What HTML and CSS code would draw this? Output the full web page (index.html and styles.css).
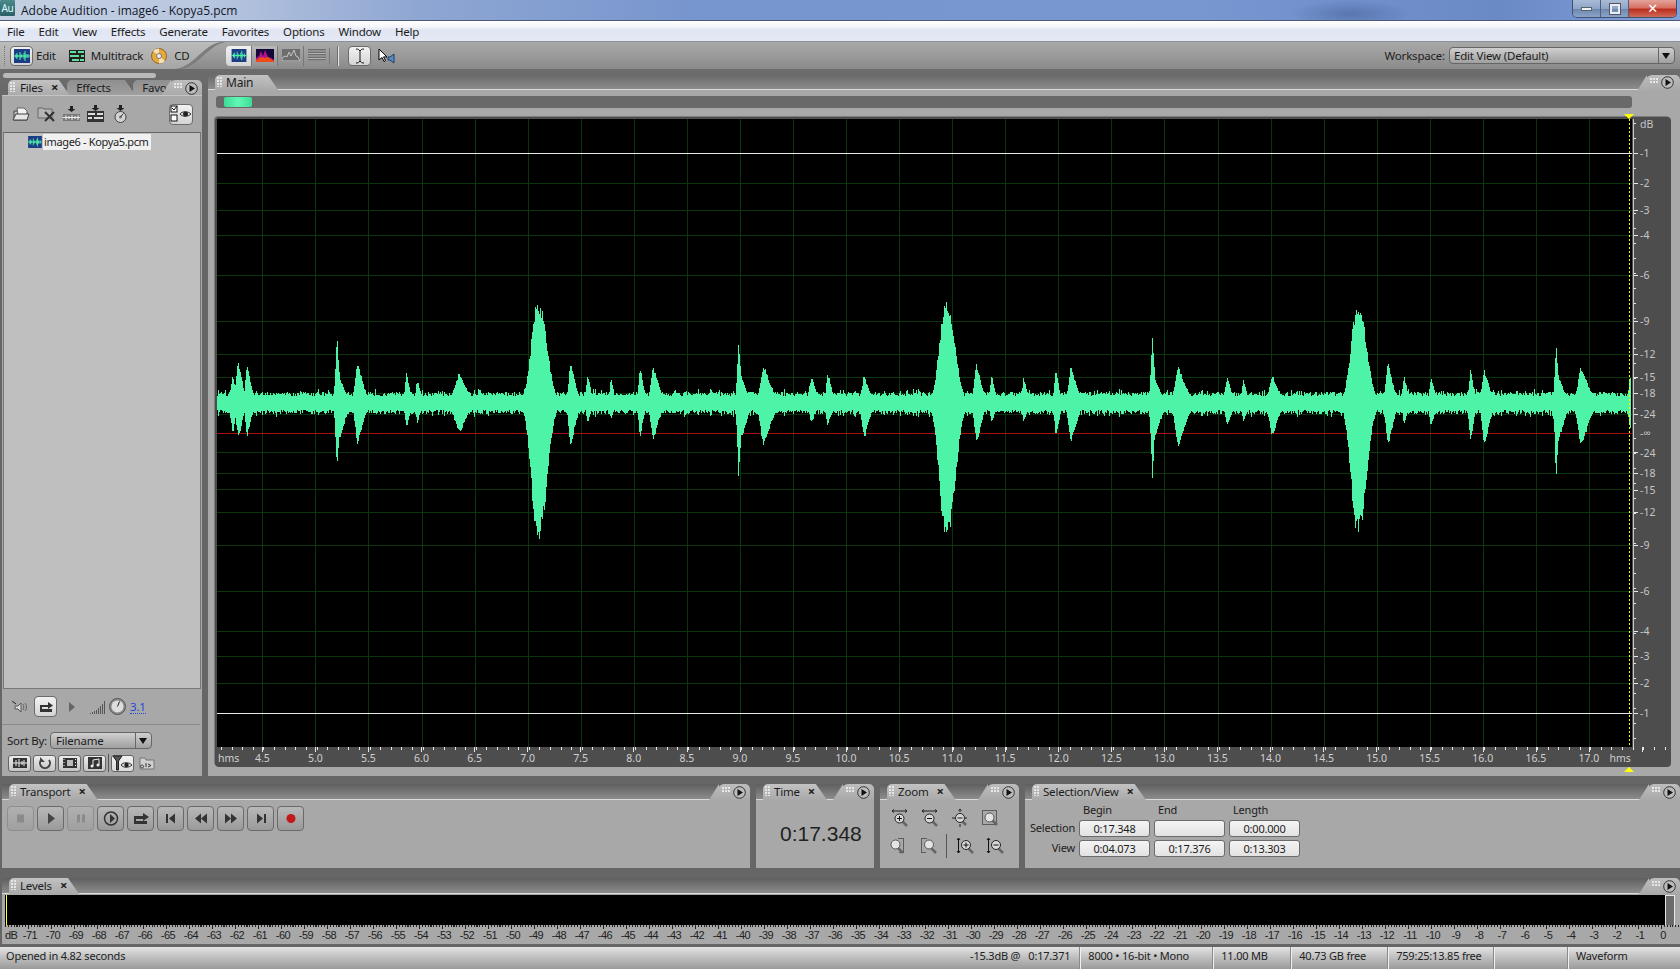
FILE: index.html
```html
<!DOCTYPE html>
<html lang="en">
<head>
<meta charset="utf-8">
<title>Adobe Audition - image6 - Kopya5.pcm</title>
<link rel="stylesheet" href="styles.css">
</head>
<body>
<svg class="defs" width="0" height="0" aria-hidden="true">
  <defs>
    <symbol id="i-wave" viewBox="0 0 16 14"><rect width="16" height="14" fill="#1c3d86"/><path d="M0 7h16M2 5v4M3 4v6M4 6v2M6 3v8M7 5v4M8 6v2M10 4v6M11 2v10M12 5v4M14 5v4" stroke="#4ef5a9" fill="none"/></symbol>
    <symbol id="i-multi" viewBox="0 0 16 12"><rect width="16" height="12" fill="#222"/><path d="M1 1h6v2H1zM9 1h6v2H9zM1 5h9v2H1zM12 5h3v2h-3zM3 9h7v2H3zM11 9h4v2h-4z" fill="#5ee09a"/></symbol>
    <symbol id="i-cd" viewBox="0 0 16 16"><circle cx="8" cy="8" r="7.5" fill="#e8a83a" stroke="#8a6a35"/><path d="M8 8 2 3a7.5 7.5 0 0 1 6-2.500zM8 8l6 5a7.500 7.500 0 0 1-6 2.500z" fill="#f6e2b8"/><circle cx="8" cy="8" r="2.500" fill="#eee" stroke="#777"/></symbol>
    <symbol id="i-spec" viewBox="0 0 18 13"><rect width="18" height="13" fill="#14083a"/><path d="M0 13V9l3-2 2-5 2 5 2-6 3 7 3 1 3 2v2z" fill="#b0128c"/><path d="M0 13v-2l5-3 4 1 3-1 6 4v1z" fill="#f04a1a"/></symbol>
    <symbol id="i-grey-a" viewBox="0 0 18 13"><rect width="18" height="13" fill="#6d6d6d"/><path d="M0 12V9l3-2 2 1 2-5 2 4 3-6 2 6 2 1 2 4z" fill="none" stroke="#c4c4c4"/></symbol>
    <symbol id="i-grey-b" viewBox="0 0 18 13"><rect width="18" height="13" fill="#6d6d6d"/><path d="M0 2h18M0 4.500h18M0 7h18M0 9.500h18M0 12h18" stroke="#b4b4b4"/></symbol>
    <symbol id="i-ibeam" viewBox="0 0 12 16"><path d="M2 1c2 0 3 .5 4 2 1-1.500 2-2 4-2M6 3v10M2 15c2 0 3-.5 4-2 1 1.500 2 2 4 2" fill="none" stroke="#111"/></symbol>
    <symbol id="i-cursor" viewBox="0 0 17 16"><path d="M1 1v11l3-2.500 2 4 1.500-.8-2-3.800H9z" fill="#fff" stroke="#000"/><path d="M10 9h2l4-3v9l-4-3h-2z" fill="#5b8ac0" stroke="#1e3d66"/></symbol>
    <symbol id="i-open" viewBox="0 0 18 16"><path d="M2 5h5l1 1h7v8H2z" fill="#bdbdbd" stroke="#444"/><path d="M5 2h7l3 3v4H6z" fill="#f2f2f2" stroke="#666"/><path d="M1 14l3-6h13l-2 6z" fill="#e6e6e6" stroke="#444"/></symbol>
    <symbol id="i-close" viewBox="0 0 19 16"><path d="M1 2h5l1 1h8v9H1z" fill="#b5b5b5" stroke="#666"/><path d="M8 6l9 9M17 6l-9 9" stroke="#333" stroke-width="2"/></symbol>
    <symbol id="i-ins-w" viewBox="0 0 17 16"><path d="M7 0h3v3h2.500L8.500 6 4.500 3H7z" fill="#222"/><rect y="8" width="17" height="7" fill="#777"/><path d="M0 11.500h17M3 9v5M6 10v3M9 9v5M12 10v3M15 9v5" stroke="#eee"/></symbol>
    <symbol id="i-ins-m" viewBox="0 0 17 18"><path d="M7 0h3v3h2.500L8.500 6 4.500 3H7z" fill="#222"/><rect y="6" width="17" height="11" fill="#333"/><path d="M1 8h7v2H1zM10 8h6v2h-6zM1 12h4v2H1zM7 12h9v2H7z" fill="#ddd"/></symbol>
    <symbol id="i-ins-c" viewBox="0 0 13 18"><path d="M5 0h3v3h2.500L6.500 6 2.500 3H5z" fill="#222"/><circle cx="6.500" cy="12" r="5.500" fill="#d4d4d4" stroke="#444"/><circle cx="6.500" cy="12" r="1.500" fill="#777"/><path d="M6.500 12l3-3.500" stroke="#333"/></symbol>
    <symbol id="i-filter" viewBox="0 0 22 18"><rect x="1" y="1" width="6" height="6" fill="#fff" stroke="#111"/><path d="M2 3l2 2 3-4" stroke="#111" fill="none"/><rect x="1" y="10" width="6" height="6" fill="#fff" stroke="#111"/><path d="M10 9c2-3 8-3 11 0-3 3-9 3-11 0z" fill="#ddd" stroke="#333"/><circle cx="15.500" cy="9" r="2.500" fill="#222"/></symbol>
    <symbol id="i-speaker" viewBox="0 0 17 12"><path d="M0 0l4 3" stroke="#222"/><path d="M3 5h3l3-3v9L6 8H3z" fill="#ddd" stroke="#555"/><path d="M11 3c1 2 1 4 0 6M13 2c2 2 2 6 0 8" stroke="#666" fill="none"/></symbol>
    <symbol id="i-loop" viewBox="0 0 16 14"><path d="M2 5h8V2l5 3.500L10 9V7H4v2h10v3H2z" fill="#333"/></symbol>
    <symbol id="i-bars" viewBox="0 0 16 14"><path d="M.500 13v1M2.500 12v2M4.500 11v3M6.500 10v4M8.500 8v6M10.500 6v8M12.500 4v10M14.500 1v13" stroke="#555" fill="none"/></symbol>
    <symbol id="i-knob" viewBox="0 0 17 17"><circle cx="8.500" cy="8.500" r="8" fill="#8c8c8c" stroke="#555"/><circle cx="8.500" cy="8.500" r="6" fill="#ddd"/><path d="M8.500 8.500l2-5" stroke="#222"/></symbol>
    <symbol id="i-f-wave" viewBox="0 0 14 10"><rect width="14" height="10" fill="#333"/><path d="M0 5h14M3 2v6M6 1v8M9 3v4M11 2v6" stroke="#eee"/></symbol>
    <symbol id="i-f-loop" viewBox="0 0 14 12"><path d="M3 3a5 5 0 1 0 8 0" fill="none" stroke="#444" stroke-width="2"/><path d="M2 0v5h5z" fill="#444"/></symbol>
    <symbol id="i-f-film" viewBox="0 0 14 10"><rect width="14" height="10" fill="#333"/><path d="M4 2h6v6H4z" fill="#bbb"/><path d="M1 1v1M1 4v1M1 7v1M12.500 1v1M12.500 4v1M12.500 7v1" stroke="#eee"/></symbol>
    <symbol id="i-f-note" viewBox="0 0 14 12"><rect width="14" height="12" fill="#333"/><path d="M5 9V3l6-1v6" stroke="#eee" fill="none"/><circle cx="4" cy="9" r="1.500" fill="#eee"/><circle cx="10" cy="8" r="1.500" fill="#eee"/></symbol>
    <symbol id="i-funnel" viewBox="0 0 20 16"><path d="M0 1h9L5.500 6v9h-2V6z" fill="#555" stroke="#222"/><path d="M8 10c2-3 8-3 11 0-3 3-9 3-11 0z" fill="#ddd" stroke="#333"/><circle cx="13.500" cy="10" r="2.200" fill="#222"/></symbol>
    <symbol id="i-folder" viewBox="0 0 16 13"><path d="M1 1h5l1 2h8v9H1z" fill="#d0d0d0" stroke="#777"/><path d="M3 8a1.500 1.500 0 1 0 .1 0M7 6v4M9 7l3 1.500L9 10" fill="none" stroke="#333"/></symbol>
    <symbol id="i-menu" viewBox="0 0 13 13"><circle cx="6.500" cy="6.500" r="5.800" fill="#bcbcbc" stroke="#333"/><path d="M4.500 3v7l5.500-3.500z" fill="#111"/></symbol>
    <symbol id="t-stop" viewBox="0 0 27 25"><rect x="10" y="8.500" width="7" height="8" fill="#8a8a8a"/></symbol>
    <symbol id="t-play" viewBox="0 0 27 25"><path d="M11 7l7 5.500-7 5.500z" fill="#444"/></symbol>
    <symbol id="t-pause" viewBox="0 0 27 25"><path d="M10 8.500h3v8h-3zM15 8.500h3v8h-3z" fill="#8a8a8a"/></symbol>
    <symbol id="t-cue" viewBox="0 0 27 25"><circle cx="14" cy="12.500" r="6.500" fill="none" stroke="#333" stroke-width="1.500"/><path d="M13 8l5 4.500-5 4.500z" fill="#333"/></symbol>
    <symbol id="t-loop" viewBox="0 0 27 25"><path d="M7 10h9V7l6 4-6 4v-2H9v2h11v3H7z" fill="#333"/></symbol>
    <symbol id="t-start" viewBox="0 0 27 25"><path d="M9 8h2v9H9zM18 7.500v10l-6-5z" fill="#333"/></symbol>
    <symbol id="t-rew" viewBox="0 0 27 25"><path d="M14 7.500v10l-6-5zM20 7.500v10l-6-5z" fill="#333"/></symbol>
    <symbol id="t-ff" viewBox="0 0 27 25"><path d="M8 7.500v10l6-5zM14 7.500v10l6-5z" fill="#333"/></symbol>
    <symbol id="t-end" viewBox="0 0 27 25"><path d="M10 7.500v10l6-5zM17 8h2v9h-2z" fill="#333"/></symbol>
    <symbol id="t-rec" viewBox="0 0 27 25"><circle cx="14" cy="12.500" r="4.500" fill="#c01a1a"/></symbol>
    <symbol id="z-in-h" viewBox="0 0 18 18"><path d="M1 2h15M1 2l2-1.500M1 2l2 1.500M16 2l-2-1.500M16 2l-2 1.500" stroke="#222" fill="none"/><path d="M11 12l5 5" stroke="#666" stroke-width="2.500"/><circle cx="8.500" cy="9.500" r="4.500" fill="#d8d8d8" stroke="#222"/><path d="M6 9.500h5M8.500 7v5" stroke="#111"/></symbol>
    <symbol id="z-out-h" viewBox="0 0 18 18"><path d="M1 2h15M1 2l2-1.500M1 2l2 1.500M16 2l-2-1.500M16 2l-2 1.500" stroke="#222" fill="none"/><path d="M11 12l5 5" stroke="#666" stroke-width="2.500"/><circle cx="8.500" cy="9.500" r="4.500" fill="#d8d8d8" stroke="#222"/><path d="M6 9.500h5" stroke="#111"/></symbol>
    <symbol id="z-out-all" viewBox="0 0 18 18"><path d="M9 0v3M7.500 1.500L9 0l1.500 1.500M9 18v-3M1 9h3M16 9h-2" stroke="#222" fill="none"/><path d="M11 12l4 4" stroke="#666" stroke-width="2.500"/><circle cx="9" cy="9" r="4.500" fill="#d8d8d8" stroke="#222"/><path d="M6.500 9h5" stroke="#111"/></symbol>
    <symbol id="z-sel" viewBox="0 0 18 18"><rect x="1.500" y="1.500" width="14" height="14" fill="none" stroke="#111" stroke-dasharray="1 1"/><path d="M11 11l5 5" stroke="#666" stroke-width="2.500"/><circle cx="8.500" cy="8.500" r="4.500" fill="#e4e4e4" stroke="#555"/></symbol>
    <symbol id="z-left" viewBox="0 0 18 18"><path d="M9.500 1.500h5v14h-5" fill="none" stroke="#111" stroke-dasharray="1 1"/><path d="M9 11l5 5" stroke="#666" stroke-width="2.500"/><circle cx="6.500" cy="7.500" r="4.500" fill="#e4e4e4" stroke="#555"/></symbol>
    <symbol id="z-right" viewBox="0 0 18 18"><path d="M7.500 1.500h-5v14h5" fill="none" stroke="#111" stroke-dasharray="1 1"/><path d="M12 11l5 5" stroke="#666" stroke-width="2.500"/><circle cx="10" cy="7.500" r="4.500" fill="#e4e4e4" stroke="#555"/></symbol>
    <symbol id="z-vin" viewBox="0 0 18 18"><path d="M2.500 1v15M1 3l1.500-2L4 3M1 14l1.500 2L4 14" stroke="#111" fill="none"/><path d="M12 11l5 5" stroke="#666" stroke-width="2.500"/><circle cx="10" cy="8" r="4.500" fill="#d8d8d8" stroke="#222"/><path d="M7.500 8h5M10 5.500v5" stroke="#111"/></symbol>
    <symbol id="z-vout" viewBox="0 0 18 18"><path d="M2.500 1v15M1 3l1.500-2L4 3M1 14l1.500 2L4 14" stroke="#111" fill="none"/><path d="M12 11l5 5" stroke="#666" stroke-width="2.500"/><circle cx="10" cy="8" r="4.500" fill="#d8d8d8" stroke="#222"/><path d="M7.500 8h5" stroke="#111"/></symbol>
  </defs>
</svg>

<header class="titlebar">
  <div class="au-logo">Au</div>
  <div class="title-text">Adobe Audition - image6 - Kopya5.pcm</div>
  <div class="winbtns">
    <div class="winbtn"><span class="win-min"></span></div>
    <div class="winbtn"><span class="win-max"></span></div>
    <div class="winbtn win-close">✕</div>
  </div>
</header>

<nav class="menubar">
  <span>File</span><span>Edit</span><span>View</span><span>Effects</span><span>Generate</span><span>Favorites</span><span>Options</span><span>Window</span><span>Help</span>
</nav>

<div class="toolbar">
  <div class="toolgrip"></div>
  <div class="modes">
    <button class="tbtn tbtn-on"><svg width="16" height="14"><use href="#i-wave"/></svg></button><span class="mode-label">Edit</span>
    <svg class="mode-icon" width="16" height="12"><use href="#i-multi"/></svg><span class="mode-label">Multitrack</span>
    <svg class="mode-icon mode-cd" width="16" height="16"><use href="#i-cd"/></svg><span class="mode-label">CD</span>
  </div>
  <div class="viewgroup">
    <button class="vbtn vbtn-on"><svg width="20" height="13"><use href="#i-wave"/></svg></button>
    <button class="vbtn"><svg width="18" height="13"><use href="#i-spec"/></svg></button>
    <button class="vbtn vbtn-off"><svg width="18" height="13"><use href="#i-grey-a"/></svg></button>
    <button class="vbtn vbtn-off"><svg width="18" height="13"><use href="#i-grey-b"/></svg></button>
  </div>
  <div class="toolsep"></div>
  <button class="tbtn tbtn-on tbtn-beam"><svg width="12" height="16"><use href="#i-ibeam"/></svg></button>
  <svg class="cursor-icon" width="17" height="16"><use href="#i-cursor"/></svg>
  <div class="workspace-box">
    <span class="workspace-label">Workspace:</span>
    <div class="combo combo-ws"><span class="combo-text">Edit View (Default)</span><span class="combo-arrow"></span></div>
  </div>
</div>

<div class="workarea">
  <aside class="left-col">
    <div class="scrollhint"></div>
    <div class="tabbar tabbar-files">
      <div class="tab tab-files"><i class="grip"></i>Files<b class="tabx">×</b></div>
      <div class="tab tab-off tab-effects">Effects</div>
      <div class="tab tab-off tab-fav">Favo</div>
      <div class="opts opts-files"><i class="grip"></i><svg width="13" height="13"><use href="#i-menu"/></svg></div>
    </div>
    <div class="files-body">
      <div class="files-tools">
        <svg width="18" height="16"><use href="#i-open"/></svg>
        <svg width="19" height="16"><use href="#i-close"/></svg>
        <svg width="17" height="16"><use href="#i-ins-w"/></svg>
        <svg width="17" height="18"><use href="#i-ins-m"/></svg>
        <svg class="tool-cd" width="13" height="18"><use href="#i-ins-c"/></svg>
        <button class="tbtn tbtn-on tbtn-filter"><svg width="22" height="18"><use href="#i-filter"/></svg></button>
      </div>
      <div class="files-list">
        <div class="file-row"><svg width="14" height="12"><use href="#i-wave"/></svg><span class="file-name">image6 - Kopya5.pcm</span></div>
      </div>
      <div class="files-preview">
        <svg width="17" height="12"><use href="#i-speaker"/></svg>
        <button class="tbtn tbtn-on tbtn-small"><svg width="16" height="14"><use href="#i-loop"/></svg></button>
        <span class="tri"></span>
        <svg class="bars" width="16" height="14"><use href="#i-bars"/></svg>
        <svg class="knob" width="17" height="17"><use href="#i-knob"/></svg>
        <span class="linkval">3.1</span>
      </div>
      <div class="sortrow">
        <span>Sort By:</span>
        <div class="combo combo-sort"><span class="combo-text">Filename</span><span class="combo-arrow"></span></div>
      </div>
      <div class="filterrow">
        <button class="fbtn"><svg width="14" height="10"><use href="#i-f-wave"/></svg></button>
        <button class="fbtn"><svg width="14" height="12"><use href="#i-f-loop"/></svg></button>
        <button class="fbtn"><svg width="14" height="10"><use href="#i-f-film"/></svg></button>
        <button class="fbtn"><svg width="14" height="12"><use href="#i-f-note"/></svg></button>
        <span class="filtersep"></span>
        <button class="fbtn fbtn-light"><svg width="20" height="16"><use href="#i-funnel"/></svg></button>
        <svg class="folder" width="16" height="13"><use href="#i-folder"/></svg>
      </div>
    </div>
  </aside>

  <main class="main-col">
    <div class="tabbar tabbar-main">
      <div class="tab"><i class="grip"></i>Main</div>
      <div class="opts"><i class="grip"></i><svg width="13" height="13"><use href="#i-menu"/></svg></div>
    </div>
    <div class="main-body">
      <div class="overview"><div class="overview-thumb"></div></div>
      <div class="waveframe">
        <canvas id="wave" class="wave-canvas" width="1415" height="628"></canvas>
        <div class="dbruler">
          <canvas id="dbticks" class="db-ticks" width="6" height="628"></canvas>
          <span class="db" style="top:-2px">dB</span>
          <span class="db" style="top:27px">-1</span>
          <span class="db" style="top:57px">-2</span>
          <span class="db" style="top:84px">-3</span>
          <span class="db" style="top:109px">-4</span>
          <span class="db" style="top:149px">-6</span>
          <span class="db" style="top:195px">-9</span>
          <span class="db" style="top:228px">-12</span>
          <span class="db" style="top:251px">-15</span>
          <span class="db" style="top:267px">-18</span>
          <span class="db" style="top:288px">-24</span>
          <span class="db" style="top:307px">-∞</span>
          <span class="db" style="top:327px">-24</span>
          <span class="db" style="top:347px">-18</span>
          <span class="db" style="top:364px">-15</span>
          <span class="db" style="top:386px">-12</span>
          <span class="db" style="top:419px">-9</span>
          <span class="db" style="top:465px">-6</span>
          <span class="db" style="top:505px">-4</span>
          <span class="db" style="top:530px">-3</span>
          <span class="db" style="top:557px">-2</span>
          <span class="db" style="top:587px">-1</span>
        </div>
        <div class="timeruler">
          <span class="hms">hms</span>
          <span>4.5</span><span>5.0</span><span>5.5</span><span>6.0</span><span>6.5</span><span>7.0</span><span>7.5</span><span>8.0</span><span>8.5</span><span>9.0</span><span>9.5</span><span>10.0</span><span>10.5</span><span>11.0</span><span>11.5</span><span>12.0</span><span>12.5</span><span>13.0</span><span>13.5</span><span>14.0</span><span>14.5</span><span>15.0</span><span>15.5</span><span>16.0</span><span>16.5</span><span>17.0</span>
          <span class="hms hms-end">hms</span>
        </div>
        <span class="marker marker-top"></span>
        <span class="marker marker-bottom"></span>
      </div>
    </div>
  </main>
</div>

<section class="dock">
  <div class="panel panel-transport">
    <div class="tabbar">
      <div class="tab"><i class="grip"></i>Transport<b class="tabx">×</b></div>
      <div class="opts opts-flat"><i class="grip"></i><svg width="13" height="13"><use href="#i-menu"/></svg></div>
    </div>
    <div class="panel-body transport-body">
      <button class="pbtn pbtn-off"><svg width="27" height="25"><use href="#t-stop"/></svg></button>
      <button class="pbtn"><svg width="27" height="25"><use href="#t-play"/></svg></button>
      <button class="pbtn pbtn-off"><svg width="27" height="25"><use href="#t-pause"/></svg></button>
      <button class="pbtn"><svg width="27" height="25"><use href="#t-cue"/></svg></button>
      <button class="pbtn"><svg width="27" height="25"><use href="#t-loop"/></svg></button>
      <button class="pbtn"><svg width="27" height="25"><use href="#t-start"/></svg></button>
      <button class="pbtn"><svg width="27" height="25"><use href="#t-rew"/></svg></button>
      <button class="pbtn"><svg width="27" height="25"><use href="#t-ff"/></svg></button>
      <button class="pbtn"><svg width="27" height="25"><use href="#t-end"/></svg></button>
      <button class="pbtn"><svg width="27" height="25"><use href="#t-rec"/></svg></button>
    </div>
  </div>
  <div class="panel panel-time">
    <div class="tabbar">
      <div class="tab"><i class="grip"></i>Time<b class="tabx">×</b></div>
      <div class="opts opts-flat"><i class="grip"></i><svg width="13" height="13"><use href="#i-menu"/></svg></div>
    </div>
    <div class="panel-body time-body">0:17.348</div>
  </div>
  <div class="panel panel-zoom">
    <div class="tabbar">
      <div class="tab"><i class="grip"></i>Zoom<b class="tabx">×</b></div>
      <div class="opts opts-flat"><i class="grip"></i><svg width="13" height="13"><use href="#i-menu"/></svg></div>
    </div>
    <div class="panel-body zoom-body">
      <div class="zoomrow">
        <svg width="18" height="18"><use href="#z-in-h"/></svg>
        <svg width="18" height="18"><use href="#z-out-h"/></svg>
        <svg width="18" height="18"><use href="#z-out-all"/></svg>
        <svg width="18" height="18"><use href="#z-sel"/></svg>
      </div>
      <div class="zoomrow zoomrow-b">
        <svg width="18" height="18"><use href="#z-left"/></svg>
        <svg width="18" height="18"><use href="#z-right"/></svg>
        <span class="zoomsep"></span>
        <svg width="18" height="18"><use href="#z-vin"/></svg>
        <svg width="18" height="18"><use href="#z-vout"/></svg>
      </div>
    </div>
  </div>
  <div class="panel panel-sel">
    <div class="tabbar">
      <div class="tab"><i class="grip"></i>Selection/View<b class="tabx">×</b></div>
      <div class="opts"><i class="grip"></i><svg width="13" height="13"><use href="#i-menu"/></svg></div>
    </div>
    <div class="panel-body sel-body">
      <span></span><span class="sel-head">Begin</span><span class="sel-head">End</span><span class="sel-head">Length</span>
      <span class="sel-label">Selection</span><span class="sel-val">0:17.348</span><span class="sel-val"></span><span class="sel-val">0:00.000</span>
      <span class="sel-label">View</span><span class="sel-val">0:04.073</span><span class="sel-val">0:17.376</span><span class="sel-val">0:13.303</span>
    </div>
  </div>
</section>

<section class="levels">
  <div class="tabbar tabbar-levels">
    <div class="tab"><i class="grip"></i>Levels<b class="tabx">×</b></div>
    <div class="opts"><i class="grip"></i><svg width="13" height="13"><use href="#i-menu"/></svg></div>
  </div>
  <div class="levels-body">
    <div class="meter"><div class="meter-black"></div><div class="meter-clip"></div></div>
    <div class="meter-ruler">
      <span class="meter-db">dB</span>
      <span>-71</span><span>-70</span><span>-69</span><span>-68</span><span>-67</span><span>-66</span><span>-65</span><span>-64</span><span>-63</span><span>-62</span><span>-61</span><span>-60</span><span>-59</span><span>-58</span><span>-57</span><span>-56</span><span>-55</span><span>-54</span><span>-53</span><span>-52</span><span>-51</span><span>-50</span><span>-49</span><span>-48</span><span>-47</span><span>-46</span><span>-45</span><span>-44</span><span>-43</span><span>-42</span><span>-41</span><span>-40</span><span>-39</span><span>-38</span><span>-37</span><span>-36</span><span>-35</span><span>-34</span><span>-33</span><span>-32</span><span>-31</span><span>-30</span><span>-29</span><span>-28</span><span>-27</span><span>-26</span><span>-25</span><span>-24</span><span>-23</span><span>-22</span><span>-21</span><span>-20</span><span>-19</span><span>-18</span><span>-17</span><span>-16</span><span>-15</span><span>-14</span><span>-13</span><span>-12</span><span>-11</span><span>-10</span><span>-9</span><span>-8</span><span>-7</span><span>-6</span><span>-5</span><span>-4</span><span>-3</span><span>-2</span><span>-1</span><span>0</span>
    </div>
  </div>
</section>

<footer class="statusbar">
  <span class="st st-msg">Opened in 4.82 seconds</span>
  <span class="st st-pos">-15.3dB @ &nbsp; 0:17.371</span>
  <span class="st st-fmt">8000 • 16-bit • Mono</span>
  <span class="st st-size">11.00 MB</span>
  <span class="st st-free">40.73 GB free</span>
  <span class="st st-time">759:25:13.85 free</span>
  <span class="st st-blank"></span>
  <span class="st st-view">Waveform</span>
</footer>
<script src="wave.js"></script>
</body>
</html>
```
FILE: styles.css
```css
* { box-sizing: border-box; }
html, body { margin: 0; padding: 0; }
body {
  width: 1680px; height: 969px; overflow: hidden;
  display: flex; flex-direction: column;
  background: #666;
  font: 11.5px "Noto Sans", "Open Sans", sans-serif;
  letter-spacing: -.2px;
  color: #1c1c1c;
}
button { padding: 0; font: inherit; }
svg { display: block; flex: none; }
.defs { position: absolute; }

/* title */
.titlebar {
  height: 21px; flex: none; display: flex; align-items: center;
  background:
    radial-gradient(ellipse 60px 14px at 1350px 14px, rgba(60,85,140,.45), transparent),
    linear-gradient(90deg, #c4d0e2 0, #b9c7df 200px, #8ea6d2 420px, #7795ce 700px, #7897d1 1200px, #6a8ac6 1500px, #82a0d8 1680px);
  border-bottom: 1px solid #4a5a78;
}
.au-logo {
  width: 15px; height: 16px; margin-top: -4px;
  background: linear-gradient(#4c8a8c, #2b5f66); color: #dff; font-size: 10px; line-height: 16px; text-align: center;
  border-radius: 1px;
}
.title-text { margin-left: 6px; font: 12px "Open Sans", "Noto Sans", sans-serif; letter-spacing: 0; color: #10182a; }
.winbtns {
  margin-left: auto; margin-right: 3px; height: 18px; align-self: flex-start;
  display: flex; border: 1px solid #3f4f6c; border-top: 0; border-radius: 0 0 5px 5px; overflow: hidden;
}
.winbtn {
  width: 28px; display: flex; align-items: center; justify-content: center;
  background: linear-gradient(#a9bbd6 0, #8fa5c8 50%, #6d86ad 52%, #8ba3c8 100%);
  border-right: 1px solid #4e5f7e;
}
.win-min { width: 11px; height: 4px; background: #eef2f8; border: 1px solid #566; }
.win-max { width: 10px; height: 10px; border: 2px solid #e8edf5; outline: 1px solid #556; }
.win-close {
  width: 47px; border-right: 0; color: #fff; font: bold 13px "DejaVu Sans", sans-serif;
  background: linear-gradient(#e4a39b 0, #d77063 45%, #bb2e20 55%, #cf6a58 100%);
}

/* menu */
.menubar {
  height: 21px; flex: none; display: flex; align-items: center; gap: 14px; padding: 1px 0 0 7px;
  background: linear-gradient(#fff 0, #f5f6fb 30%, #e0e5f3 45%, #e5e9f5 100%);
  border-bottom: 1px solid #8d919b;
}

/* toolbar */
.toolbar {
  height: 27px; flex: none; display: flex; align-items: center; position: relative;
  background: linear-gradient(#a8a8a8, #9c9c9c 45%, #8a8a8a);
}
.toolbar::before, .toolbar::after { content: ""; position: absolute; left: 0; top: 0; width: 240px; height: 27px; }
.toolbar::before { background: #7c7c7c; clip-path: path("M0 0H226C208 2 198 27 178 27H0Z"); }
.toolbar::after { background: linear-gradient(#bcbcbc, #a6a6a6); clip-path: path("M0 0H221C203 2 193 27 173 27H0Z"); }
.toolbar > * { position: relative; z-index: 1; }
.toolgrip { width: 3px; height: 20px; margin-left: 4px; border-left: 1px dotted #777; }
.modes { display: flex; align-items: center; margin-left: 3px; }
.mode-label { margin-left: 3px; }
.mode-icon { margin-left: 13px; margin-right: 3px; }
.mode-cd { margin-left: 8px; margin-right: 4px; }
.tbtn {
  width: 23px; height: 20px; display: flex; align-items: center; justify-content: center;
  background: linear-gradient(#f2f2f2, #d4d4d4); border: 1px solid #6c6c6c; border-radius: 4px;
}
.viewgroup {
  display: flex; height: 20px; margin-left: 37px; border-radius: 4px; overflow: hidden;
}
.vbtn {
  width: 26px; display: flex; align-items: center; justify-content: center; border: 0;
  background: linear-gradient(#b9b9b9, #949494); border-right: 1px solid #777;
}
.vbtn-on { background: linear-gradient(#f2f2f2, #d4d4d4); }
.vbtn-off { background: linear-gradient(#a6a6a6, #8f8f8f); }
.toolsep { width: 1px; height: 20px; margin-left: 8px; background: #e4e4e4; box-shadow: -1px 0 #6f6f6f; }
.tbtn-beam { margin-left: 9px; }
.cursor-icon { margin-left: 7px; }
.workspace-box { margin-left: auto; margin-right: 5px; display: flex; align-items: center; gap: 4px; }
.workspace-label { color: #222; }
.combo {
  display: flex; align-items: center; height: 17px;
  background: linear-gradient(#cfcfcf, #a0a0a0); border: 1px solid #666; border-radius: 4px; position: relative;
}
.combo-text { padding-left: 4px; flex: 1; }
.combo-arrow { width: 16px; height: 100%; border-left: 1px solid #666; position: relative; }
.combo-arrow::after {
  content: ""; position: absolute; left: 3px; top: 5px;
  border: 4px solid transparent; border-top: 6px solid #111; border-bottom: 0;
}
.combo-ws { width: 226px; }

/* tab bars */
.tabbar {
  height: 16px; flex: none; display: flex; position: relative; overflow: visible;
  background: linear-gradient(#5f5f5f, #8c8c8c);
  border-bottom: 1px solid #dadada;
}
.tab {
  position: relative; height: 16px; margin-left: 7px; padding: 0 3px 0 11px; line-height: 15px; z-index: 2;
  background: linear-gradient(#c2c2c2, #a9a9a9); border-radius: 5px 7px 0 0; white-space: nowrap;
}
.tab::after {
  content: ""; position: absolute; top: 0; right: -9px; width: 16px; height: 16px;
  background: linear-gradient(#c2c2c2, #a9a9a9);
  clip-path: polygon(0 0, 30% 0, 100% 100%, 0 100%); border-radius: 0 5px 0 0;
}
.tab > * { position: relative; z-index: 1; }
.grip {
  position: absolute; left: 2px; top: 2px; width: 6px; height: 10px;
  background: radial-gradient(circle at 1px 1px, #e6e6e6 1px, transparent 1.2px) 0 0 / 3px 3px;
}
.tabx { margin-left: 8px; font-weight: bold; font-size: 13px; line-height: 12px; }
.tab-off { background: linear-gradient(#8f8f8f, #a0a0a0); z-index: 1; margin-left: 9px; padding-left: 9px; }
.tab-off::after { background: linear-gradient(#8f8f8f, #a0a0a0); }
.opts {
  position: absolute; right: 0; top: 0; height: 16px; width: 32px; z-index: 3; padding-right: 4px;
  display: flex; align-items: center; justify-content: flex-end;
  background: linear-gradient(#bdbdbd, #a9a9a9); border-radius: 6px 5px 0 0;
}
.opts .grip { left: 4px; top: 3px; height: 6px; width: 9px; }
.opts::before {
  content: ""; position: absolute; left: -9px; top: 0; width: 10px; height: 16px;
  background: linear-gradient(#bdbdbd, #a9a9a9); clip-path: polygon(100% 0, 100% 100%, 0 100%);
}

/* work area */
.workarea { height: 707px; flex: none; display: flex; background: linear-gradient(#6c6c6c, #666 40px); }
.left-col { width: 200px; margin-left: 2px; display: flex; flex-direction: column; padding-top: 4px; }
.scrollhint { height: 5px; width: 153px; margin-left: 1px; background: #b9b9b9; border-radius: 3px; margin-bottom: 2px; }
.tabbar-files { background: transparent; border-bottom: 1px solid #c4c4c4; overflow: hidden; }
.tabbar-files .tab { margin-left: 6px; }
.tab-files { padding-left: 12px; }
.tab-effects { padding: 0 3px 0 9px; margin-left: 9px; width: 60px; }
.tab-fav { width: 50px; padding-left: 9px; margin-left: 11px; }
.files-body { flex: 1; background: #a8a8a8; display: flex; flex-direction: column; }
.files-tools { height: 36px; display: flex; align-items: center; gap: 7px; padding-left: 10px; flex: none; }
.tool-cd { margin-left: 3px; }
.tbtn-filter { width: 24px; margin-left: auto; margin-right: 9px; height: 21px; }
.files-list { flex: none; height: 557px; margin: 0 1px; background: #bfbfbf; border: 1px solid #777; border-top-color: #666; }
.file-row { display: flex; align-items: center; height: 16px; padding-left: 24px; gap: 1px; margin-top: 1px; }
.file-name { background: #f0f0f0; padding: 0 2px 0 1px; line-height: 16px; font-size: 11px; letter-spacing: -.35px; }
.files-preview { height: 36px; display: flex; align-items: center; flex: none; padding-left: 10px; border-bottom: 1px solid #8a8a8a; margin: 0 2px 0 0; }
.tbtn-small { margin-left: 5px; height: 21px; }
.tri { margin-left: 12px; border: 5px solid transparent; border-left: 6px solid #666; border-right: 0; }
.bars { margin-left: 15px; }
.knob { margin-left: 3px; }
.linkval { margin-left: 4px; color: #2348d8; border-bottom: 1px dotted #2348d8; line-height: 13px; }
.sortrow { display: flex; align-items: center; gap: 3px; padding: 7px 0 0 5px; flex: none; }
.combo-sort { width: 102px; }
.combo-sort .combo-text { padding-left: 5px; }
.filterrow { display: flex; align-items: center; padding: 5px 0 0 6px; gap: 2px; flex: none; }
.fbtn {
  width: 23px; height: 17px; display: flex; align-items: center; justify-content: center;
  background: linear-gradient(#ececec, #c4c4c4); border: 1px solid #666; border-radius: 3px;
}
.fbtn-light { background: linear-gradient(#f2f2f2, #dcdcdc); }
.filtersep { width: 1px; height: 18px; background: #555; }
.folder { margin-left: 3px; }

.main-col { width: 1472px; margin-left: 6px; display: flex; flex-direction: column; padding-top: 6px; }
.tabbar-main { height: 15px; background: linear-gradient(#6a6a6a, #8c8c8c); }
.tabbar-main .tab { height: 15px; width: 55px; padding-left: 11px; line-height: 15px; font-size: 12px; }
.tabbar-main .opts { height: 15px; width: 34px; padding-right: 6px; }
.main-body { flex: 1; background: #a8a8a8; padding: 6px 9px 0 7px; display: flex; flex-direction: column; }
.overview { height: 12px; width: 1416px; margin: 0 0 9px 1px; background: #696969; border-radius: 3px; padding: 1px 0 0 8px; }
.overview-thumb { width: 28px; height: 10px; background: linear-gradient(90deg, #3fdc97, #60f8b5 50%, #3fdc97); border-radius: 2px; }
.waveframe {
  position: relative; height: 650px; background: #4d4d4d; border-radius: 4px;
  display: grid; grid-template-columns: 1416px 38px; grid-template-rows: 628px 20px; padding: 2px 0 0 2px;
  box-shadow: -1px -1px 0 #7c7c7c;
}
.wave-canvas { display: block; width: 1415px; height: 628px; }
.dbruler { position: relative; border-left: 1px solid #c8c8c8; color: #c6c6c6; font-size: 10.5px; letter-spacing: 0; }
.db-ticks { position: absolute; left: 0; top: 0; }
.db { position: absolute; left: 6px; line-height: 14px; }
.timeruler {
  grid-column: 1 / 3; display: flex; color: #d0d0d0; font-size: 10.5px; line-height: 14px; padding-top: 4px; letter-spacing: 0;
  background:
    repeating-linear-gradient(90deg, #e8e8e8 0 1px, transparent 1px 10.614px) 4px 0 / 100% 3px no-repeat,
    repeating-linear-gradient(90deg, #e8e8e8 0 1px, transparent 1px 53.07px) 45.3px 0 / 100% 5px no-repeat;
}
.timeruler span { width: 53.07px; flex: none; text-align: center; }
.timeruler .hms { width: 18.8px; text-align: left; padding-left: 1px; flex: none; overflow: visible; white-space: nowrap; }
.timeruler .hms-end { padding-left: 0; width: 30px; margin-left: -6px; }
.marker { position: absolute; left: 1409px; width: 0; height: 0; border: 5px solid transparent; }
.marker-top { top: -3px; border-top: 5px solid #ffff00; border-bottom: 0; }
.marker-bottom { top: 650px; border-bottom: 5px solid #ffff00; border-top: 0; }

/* dock */
.dock { height: 92px; flex: none; display: flex; gap: 6px; padding: 8px 0 0 2px; background: #666; }
.panel { display: flex; flex-direction: column; }
.panel-transport { width: 748px; }
.panel-time { width: 118px; }
.panel-zoom { width: 139px; }
.panel-sel { flex: 1; }
.panel-body { flex: 1; background: #a8a8a8; }
.dock .tabbar { height: 16px; }
.transport-body { display: flex; gap: 3px; padding: 6px 0 0 5px; align-items: flex-start; }
.pbtn {
  width: 27px; height: 25px; background: linear-gradient(#b8b8b8, #9a9a9a); border: 1px solid #6a6a6a; border-radius: 4px;
  display: block; position: relative;
}
.pbtn svg { margin: -1px; }
.pbtn-off { border-color: #8e8e8e; background: linear-gradient(#b0b0b0, #a0a0a0); }
.time-body { font: 21px/68px "Liberation Sans", Arial, sans-serif; letter-spacing: 0; color: #222; padding-left: 24px; }
.zoom-body { padding-top: 4px; }
.zoomrow { display: flex; gap: 12px; padding-left: 11px; height: 28px; align-items: center; }
.zoomrow-b { padding-left: 9px; gap: 12px; }
.zoomsep { width: 1px; height: 24px; background: #555; margin: 0 -3px; }
.sel-body {
  display: grid; grid-template-columns: 50px 71px 71px 71px; grid-template-rows: 15px 17px 17px; column-gap: 4px; row-gap: 3px;
  padding: 2px 0 0 0; align-content: start; font-size: 11px;
}
.sel-head { padding-left: 4px; line-height: 15px; }
.sel-label { text-align: right; line-height: 16px; }
.sel-val {
  background: linear-gradient(#f4f4f4, #e2e2e2); border: 1px solid #6c6c6c; border-radius: 3px; text-align: center; line-height: 15px;
}

/* levels */
.levels { height: 79px; flex: none; padding: 10px 0 0 2px; display: flex; flex-direction: column; background: #666; }
.tabbar-levels { height: 16px; }
.levels-body { height: 50px; background: #a8a8a8; }
.meter { height: 31px; display: flex; padding: 1px 5px 0 3px; }
.meter-black { flex: 1; background: #000; position: relative; border-left: 1px solid #000; }
.meter-black::before { content: ""; position: absolute; left: 0; top: 0; bottom: 0; width: 1px; background: #ffff30; }
.meter-clip { width: 10px; background: #6b6b6b; border: 1px solid #e6e6e6; border-bottom: 0; }
.meter-ruler {
  display: flex; font: 11px/13px "Liberation Sans", Arial, sans-serif; letter-spacing: -.5px; padding: 4px 0 0 3px; color: #222; height: 19px; white-space: nowrap;
  background:
    repeating-linear-gradient(90deg, #222 0 1px, transparent 1px 2.875px) 3px 0 / 100% 2px no-repeat,
    repeating-linear-gradient(90deg, #222 0 1px, transparent 1px 23px) 26px 0 / 100% 4px no-repeat;
}
.meter-ruler span { width: 23px; flex: none; text-align: center; }
.meter-ruler .meter-db { width: 13.5px; text-align: left; }

/* status */
.statusbar {
  height: 22px; flex: none; display: flex; align-items: center;
  background: linear-gradient(#e4e4e4, #c4c4c4 40%, #9a9a9a); font-size: 11px; color: #222; white-space: nowrap;
}
.st { height: 22px; line-height: 18px; padding-left: 7px; border-left: 1px solid #f0f0f0; box-shadow: -1px 0 #8a8a8a; }
.st-msg { width: 940px; padding-left: 6px; border: 0; box-shadow: none; }
.st-pos { width: 141px; text-align: right; padding: 0 10px 0 0; border: 0; box-shadow: none; }
.st-fmt { width: 133px; }
.st-size { width: 78px; }
.st-free { width: 97px; }
.st-time { width: 106px; }
.st-blank { width: 74px; }
.st-view { width: 112px; }
```
FILE: wave.js
```js
(function () {
  var K = 1680 / 1568;
  var OX = 217, OY = 119;
  var canvas = document.getElementById('wave');
  var ctx = canvas.getContext('2d');
  var W = canvas.width, H = canvas.height;

  var seed = 12345;
  function rnd() { seed = (seed * 1664525 + 1013904223) >>> 0; return seed / 4294967296; }

  ctx.fillStyle = '#000';
  ctx.fillRect(0, 0, W, H);

  /* grid */
  ctx.fillStyle = '#0b350b';
  for (var i = -1; i < 27; i++) {
    ctx.fillRect(Math.round(262.3 + i * 53.07 - OX), 0, 1, H);
  }
  var center = 433;
  [280, 250, 223, 198, 158, 112, 79, 56, 40, 19].forEach(function (d) {
    ctx.fillRect(0, center - d - OY, W, 1);
    ctx.fillRect(0, center + d - OY, W, 1);
  });
  ctx.fillStyle = '#e8e8e8';
  ctx.fillRect(0, 153 - OY, W, 1);
  ctx.fillRect(0, 713 - OY, W, 1);
  ctx.fillStyle = '#a80f0f';
  ctx.fillRect(0, center - OY, W, 1);

  /* envelope: x, top, bottom (in the 1568-wide picture), rise, fall, shape power */
  var bursts = [
    [222, 335, 410, 3, 5, 1.5], [230, 338, 409, 2, 5, 1.5], [217, 350, 405, 3, 3, 1.5],
    [314, 310, 440, 1.8, 2.8, 1.4], [316, 352, 412, 1, 7, 1.5], [333, 338, 415, 3, 7, 1.5],
    [379, 348, 400, 2, 4, 1.5], [389, 354, 395, 2, 4, 1.5], [428, 348, 405, 6, 9, 1.5],
    [502, 280, 504, 9, 11, 2.2], [532, 338, 418, 2.5, 6, 1.5], [548, 350, 396, 2, 4, 1.5], [570, 352, 392, 2, 3, 1.5],
    [597, 342, 408, 2, 4, 1.5], [609, 342, 412, 3, 7, 1.5], [689, 314, 450, 1.8, 2.8, 1.4], [691, 352, 412, 1, 7, 1.5],
    [712, 340, 418, 4, 9, 1.5], [757, 350, 395, 3, 5, 1.5], [772, 348, 398, 2, 5, 1.5], [806, 350, 410, 3, 6, 1.5],
    [883, 280, 507, 9, 11, 2.2], [911, 338, 415, 3, 6, 1.5], [925, 350, 395, 2, 4, 1.5], [955, 352, 394, 2, 4, 1.5],
    [985, 345, 410, 2, 4, 1.5], [999, 342, 415, 3, 7, 1.5], [1075, 310, 450, 1.8, 2.8, 1.4], [1077, 352, 412, 1, 7, 1.5],
    [1099, 342, 418, 4, 9, 1.5], [1145, 352, 398, 3, 5, 1.5], [1160, 354, 394, 2, 4, 1.5], [1187, 350, 408, 4, 7, 1.5],
    [1267, 283, 500, 9, 11, 2.2], [1295, 338, 418, 3, 6, 1.5], [1310, 350, 396, 2, 4, 1.5], [1335, 352, 398, 2, 5, 1.5],
    [1372, 345, 412, 2, 4, 1.5], [1385, 345, 418, 3, 6, 1.5], [1452, 318, 450, 1.8, 2.8, 1.4], [1454, 352, 412, 1, 7, 1.5],
    [1475, 342, 418, 4, 9, 1.5], [1521, 350, 402, 2, 4, 1.5]
  ].map(function (b) {
    return { x: b[0] * K, up: 403 - b[1] * K, dn: b[2] * K - 403, rise: b[3] * K, fall: b[4] * K, p: b[5] };
  });

  ctx.fillStyle = '#4df4a8';
  var cy = 403;
  for (var x = 0; x < W - 1; x++) {
    var px = x + OX;
    var up = 7 + rnd() * 4, dn = 7 + rnd() * 4;
    if (rnd() < 0.12) { up += 3; dn += 3; }
    for (var j = 0; j < bursts.length; j++) {
      var b = bursts[j];
      var d = px - b.x;
      var s = Math.abs(d < 0 ? d / b.rise : d / b.fall);
      var g = Math.exp(-Math.pow(s, b.p));
      if (g < 0.01) continue;
      var j1 = 0.86 + rnd() * 0.14, j2 = 0.86 + rnd() * 0.14;
      up = Math.max(up, b.up * g * j1);
      dn = Math.max(dn, b.dn * g * j2);
    }
    ctx.fillRect(x, Math.round(cy - up - OY), 1, Math.round(up + dn));
  }

  /* play cursor */
  ctx.fillStyle = '#ffff00';
  for (var y = 0; y < H; y += 4) ctx.fillRect(1412, y, 1, 2);

  /* minor ticks on the level ruler */
  var t = document.getElementById('dbticks').getContext('2d');
  t.fillStyle = '#e6e6e6';
  var marks = [153, 183, 210, 235, 275, 321, 354, 377, 393, 414, 452, 473, 490, 512, 545, 591, 631, 656, 683, 713];
  marks.forEach(function (m) { t.fillRect(0, m - OY, 4, 1); });
  for (var my = 4; my < H; my += 15) t.fillRect(0, my, 2, 1);
})();
```
